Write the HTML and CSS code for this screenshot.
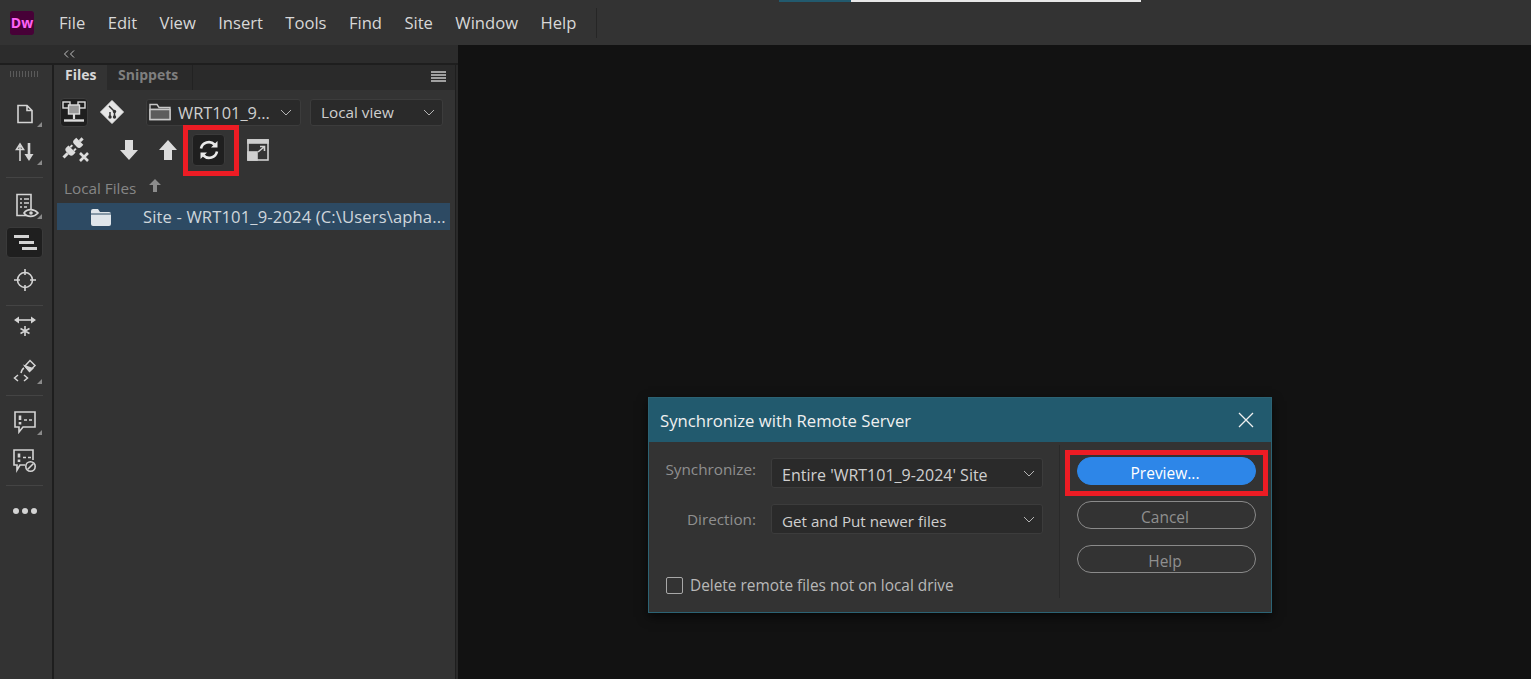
FILE: index.html
```html
<!DOCTYPE html>
<html lang="en">
  <head>
    <meta charset="UTF-8" />
    <title>Dreamweaver - Synchronize</title>
    <link rel="stylesheet" href="styles.css">
  </head>
  <body>
    <header class="menubar">
      <div class="logo">Dw</div>
      <nav class="menu">
        <span>File</span><span>Edit</span><span>View</span><span>Insert</span><span>Tools</span><span>Find</span><span>Site</span><span>Window</span><span>Help</span>
      </nav>
      <div class="menu-sep"></div>
      <div class="progress"><i></i></div>
    </header>

    <div class="workspace">
      <aside class="side">
        <div class="collapse-row">
          <svg width="12" height="8" viewBox="0 0 12 8" fill="none" stroke="#c0c0c0"><path d="M5 .5 1.500 4 5 7.500M11 .5 7.500 4 11 7.500"/></svg>
        </div>
        <div class="side-body">
          <div class="toolbar">
            <div class="grip"></div>
            <div class="tool-group g-file">
              <div class="tool corner">
                <svg width="20" height="20" viewBox="0 0 20 20" fill="none" stroke="#d4d4d4" stroke-width="1.600"><path d="M3 1.500h9l5 5v12H3zM12 1.500v5h5"/></svg>
              </div>
              <div class="tool corner">
                <svg width="22" height="22" viewBox="0 0 22 22" fill="none" stroke="#d4d4d4" stroke-width="1.600"><path d="M6 20V5M2.500 8.500 6 3l3.500 5.500H2.500z"/><path d="M15 2v13" stroke-width="2.600"/><path d="M10.500 13h9L15 20z" fill="#d4d4d4" stroke="none"/></svg>
              </div>
            </div>
            <div class="tool-group g-view">
              <div class="tool corner">
                <svg class="nudge" width="26" height="26" viewBox="0 0 26 26" fill="none" stroke="#d4d4d4" stroke-width="1.600"><path d="M3 1.500h14v21H3z"/><path d="M6 6h2M10 6h5M6 10h2M10 10h5M6 14h2M10 14h3"/><path d="M10 20c3-4.500 10-4.500 14 0-4 4.500-11 4.500-14 0z" fill="#333"/><circle cx="17" cy="20" r="1.800" fill="#d4d4d4" stroke="none"/></svg>
              </div>
              <div class="tool active">
                <svg width="24" height="18" viewBox="0 0 24 18" fill="#d4d4d4"><rect x="1" y="1" width="15" height="3"/><rect x="6" y="7" width="15" height="3"/><rect x="9" y="13" width="15" height="3"/></svg>
              </div>
              <div class="tool">
                <svg width="22" height="22" viewBox="0 0 22 22" fill="none" stroke="#d4d4d4" stroke-width="1.600"><circle cx="11" cy="11" r="7.500"/><path d="M11 0v6M11 16v6M0 11h6M16 11h6"/></svg>
              </div>
            </div>
            <div class="tool-group g-code">
              <div class="tool">
                <svg width="24" height="22" viewBox="0 0 24 22" fill="none" stroke="#d4d4d4" stroke-width="1.600"><path d="M3 5h18"/><path d="M6 1.500 1 5l5 3.500zM18 1.500 23 5l-5 3.500z" fill="#d4d4d4" stroke="none"/><path d="M12 11v10M7.500 13.500l9 5M16.500 13.500l-9 5"/></svg>
              </div>
              <div class="tool corner">
                <svg width="24" height="26" viewBox="0 0 24 26" fill="none" stroke="#d4d4d4" stroke-width="1.500"><path d="M12 8l5-5.500 5 5-5.500 5.500z"/><path d="M12 8l7.500 2.500-3 3z" fill="#d4d4d4"/><path d="M11 10c-2 1-2.500 3-3 5"/><path d="M5 17l-3.500 3L5 23M11 17l3.500 3L11 23"/></svg>
              </div>
            </div>
            <div class="tool-group g-comment">
              <div class="tool corner">
                <svg width="24" height="24" viewBox="0 0 24 24" fill="none" stroke="#d4d4d4" stroke-width="1.600"><path d="M2 2h20v15H10l-4 5v-5H2z"/><path d="M7 5.500v4.500" stroke-width="2.600"/><path d="M7 12v2.500" stroke-width="2.600"/><path d="M11 10h3M16 10h3" stroke-width="1.500"/></svg>
              </div>
              <div class="tool">
                <svg width="24" height="24" viewBox="0 0 24 24" fill="none" stroke="#d4d4d4" stroke-width="1.600"><path d="M12 16H7l-3 5v-5H1V1h19v10"/><path d="M6 4.500v4" stroke-width="2.600"/><path d="M6 10.500v2.500" stroke-width="2.600"/><path d="M10 8.500h3M15 8.500h3" stroke-width="1.500"/><circle cx="17.500" cy="17.500" r="4.700"/><path d="M14.500 20.500l6-6"/></svg>
              </div>
            </div>
            <div class="tool-group dots">
              <i></i><i></i><i></i>
            </div>
          </div>

          <section class="panel">
            <div class="tabs">
              <div class="tab on">Files</div>
              <div class="tab">Snippets</div>
              <div class="tabs-menu"><i></i><i></i><i></i><i></i></div>
            </div>

            <div class="panel-row top-row">
              <div class="icon-btn boxed">
                <svg width="24" height="23" viewBox="0 0 24 23" fill="none" stroke="#dcdcdc" stroke-width="1.400"><rect x="1" y="1" width="7" height="6"/><rect x="16" y="1" width="7" height="6"/><rect x="6.500" y="4" width="11" height="9" fill="#9a9a9a"/><path d="M12 13v5" stroke-width="2.200"/><path d="M2 19.500h20" stroke-width="2.400"/></svg>
              </div>
              <div class="git-btn">
                <svg width="24" height="24" viewBox="0 0 24 24"><path d="M12 .5 23.500 12 12 23.500.5 12z" fill="#e6e6e6" stroke="#e6e6e6" stroke-linejoin="round"/><path d="M9 6l5 5M14.500 11.500v5.500M10 12v5" stroke="#333" stroke-width="1.500" fill="none"/><circle cx="14.500" cy="11.500" r="1.700" fill="#333"/><circle cx="14.500" cy="17" r="1.700" fill="#333"/><circle cx="10" cy="17" r="1.700" fill="#333"/></svg>
              </div>
              <div class="select site-select">
                <svg width="22" height="18" viewBox="0 0 22 18" fill="none" stroke="#c8c8c8" stroke-width="1.400"><path d="M1 16.500V1.500h7l2 3h11v12zM1 6.500h20"/><path d="M1 6.500h20v10H1z" fill="#5c5c5c"/></svg>
                <span>WRT101_9...</span>
                <svg class="chev" width="12" height="7" viewBox="0 0 12 7" fill="none" stroke="#b4b4b4"><path d="M1 1l5 5 5-5"/></svg>
              </div>
              <div class="select view-select">
                <span>Local view</span>
                <svg class="chev" width="12" height="7" viewBox="0 0 12 7" fill="none" stroke="#b4b4b4"><path d="M1 1l5 5 5-5"/></svg>
              </div>
            </div>

            <div class="panel-row actions">
              <div class="act disconnect">
                <svg width="31" height="26" viewBox="0 0 31 26" fill="#dcdcdc"><g transform="rotate(45 12 12)"><rect x="10.500" y="-3" width="3" height="4"/><path d="M7 1h10v3q0 3-3 3h-4q-3 0-3-3z"/><rect x="8.500" y="9" width="2" height="3"/><rect x="13.500" y="9" width="2" height="3"/><path d="M7 12h10v3q0 3-3 3h-4q-3 0-3-3z"/><rect x="10.500" y="18" width="3" height="6"/></g><path d="M20 16l8 8M28 16l-8 8" fill="none" stroke="#dcdcdc" stroke-width="2.600"/></svg>
              </div>
              <div class="act down">
                <svg width="18" height="20" viewBox="0 0 18 20" fill="#dcdcdc"><path d="M5 0h8v10h5l-9 10-9-10h5z"/></svg>
              </div>
              <div class="act up">
                <svg width="18" height="20" viewBox="0 0 18 20" fill="#dcdcdc"><path d="M5 20h8V10h5L9 0 0 10h5z"/></svg>
              </div>
              <div class="refresh">
                <svg width="20" height="20" viewBox="0 0 20 20" fill="none" stroke="#eaeaea" stroke-width="2.600"><path d="M2 8.500A8 8 0 0 1 15.500 4.500"/><path d="M18 11.500A8 8 0 0 1 4.500 15.500"/><path d="M18.500 1v6.500H12z" fill="#eaeaea" stroke="none"/><path d="M1.500 19v-6.500H8z" fill="#eaeaea" stroke="none"/></svg>
              </div>
              <div class="act expand">
                <svg width="22" height="22" viewBox="0 0 22 22" fill="none" stroke="#cfcfcf" stroke-width="1.600"><rect x="1" y="1" width="20" height="20"/><rect x="1" y="1" width="20" height="3" fill="#cfcfcf"/><rect x="1" y="13" width="9" height="8" fill="#cfcfcf"/><path d="M11 13l6-5M13 7.500h4.500V12"/></svg>
              </div>
              <div class="mark mark-refresh"></div>
            </div>

            <div class="list-head">
              <span>Local Files</span>
              <svg width="12" height="13" viewBox="0 0 12 13" fill="#8c8c8c"><path d="M4 13h4V6h4L6 0 0 6h4z"/></svg>
            </div>
            <div class="list-row">
              <svg width="22" height="18" viewBox="0 0 22 18"><path d="M1 16V3q0-2 2-2h5l2 3h9q2 0 2 2v10q0 2-2 2H3q-2 0-2-2z" fill="#dfe5ea"/><path d="M1 6h20" stroke="#2d4a63"/></svg>
              <span>Site - WRT101_9-2024 (C:\Users\apha...</span>
            </div>
          </section>
        </div>
      </aside>

      <main class="canvas">
        <div class="dialog">
          <div class="dialog-title">
            <span>Synchronize with Remote Server</span>
            <svg width="16" height="16" viewBox="0 0 16 16" stroke="#f0f0f0" stroke-width="1.300"><path d="M1 1l14 14M15 1 1 15"/></svg>
          </div>
          <div class="dialog-body">
            <div class="dialog-form">
              <div class="field sync">
                <label>Synchronize:</label>
                <div class="select wide sync-select"><span>Entire 'WRT101_9-2024' Site</span>
                  <svg class="chev" width="12" height="7" viewBox="0 0 12 7" fill="none" stroke="#b4b4b4"><path d="M1 1l5 5 5-5"/></svg>
                </div>
              </div>
              <div class="field">
                <label>Direction:</label>
                <div class="select wide"><span>Get and Put newer files</span>
                  <svg class="chev" width="12" height="7" viewBox="0 0 12 7" fill="none" stroke="#b4b4b4"><path d="M1 1l5 5 5-5"/></svg>
                </div>
              </div>
              <div class="check"><i></i><span>Delete remote files not on local drive</span></div>
            </div>
            <div class="dialog-actions">
              <div class="btn primary">Preview...</div>
              <div class="btn">Cancel</div>
              <div class="btn">Help</div>
              <div class="mark mark-preview"></div>
            </div>
          </div>
        </div>
      </main>
    </div>
  </body>
</html>
```

FILE: styles.css
```css
* {
  box-sizing: border-box;
}

html,
body {
  height: 100%;
}

body {
  margin: 0;
  overflow: hidden;
  display: flex;
  flex-direction: column;
  font-family: "Open Sans", "Noto Sans", sans-serif;
  background-color: #121212;
  color: #d0d0d0;
}

.menubar {
  position: relative;
  flex: 0 0 45px;
  display: flex;
  align-items: center;
  padding-left: 10px;
  background-color: #333;
}

.logo {
  width: 24px;
  height: 24px;
  border-radius: 3px;
  background-color: #470137;
  color: #ff61f6;
  font-size: 14px;
  font-weight: 700;
  line-height: 24px;
  text-align: center;
}

.menu {
  display: flex;
  gap: 22.400px;
  margin-left: 25px;
  font-size: 16.600px;
  color: #d8d8d8;
}

.menu-sep {
  width: 1px;
  height: 30px;
  margin-left: 20px;
  background-color: #262626;
}

.progress {
  position: absolute;
  top: 0;
  left: 779px;
  width: 362px;
  height: 2px;
  background-color: #e8e8e8;
}

.progress i {
  display: block;
  width: 72px;
  height: 2px;
  background-color: #225a6e;
}

.workspace {
  flex: 1;
  display: flex;
  min-height: 0;
}

.side {
  flex: 0 0 458px;
  display: flex;
  flex-direction: column;
  background-color: #2a2a2a;
}

.collapse-row {
  flex: 0 0 20px;
  padding: 5px 0 0 63px;
  background-color: #2c2c2c;
  border-bottom: 2px solid #1e1e1e;
}

.collapse-row svg {
  display: block;
}

.side-body {
  flex: 1;
  display: flex;
  min-height: 0;
}

.toolbar {
  flex: 0 0 54px;
  padding: 0 9px 0 6px;
  background-color: #333;
  border-right: 2px solid #1e1e1e;
}

.grip {
  width: 30px;
  height: 6px;
  margin: 6px auto 0;
  background: repeating-linear-gradient(90deg, #5a5a5a 0 1px, transparent 1px 3px);
}

.tool-group {
  display: flex;
  flex-direction: column;
  gap: 7px;
  border-bottom: 1px solid #444;
}

.g-file {
  margin-top: 21px;
  padding-bottom: 10px;
}

.g-view {
  gap: 6px;
  padding: 12px 0 10px;
}

.g-code {
  gap: 14px;
  padding: 4px 0 9px;
}

.g-comment {
  gap: 8px;
  padding: 10px 0 9px;
}

.tool {
  position: relative;
  height: 31px;
  display: flex;
  align-items: center;
  justify-content: center;
}

.nudge {
  margin-left: 5px;
}

.tool.active {
  background-color: #1f1f1f;
  border: 1px solid #3a3a3a;
  border-radius: 4px;
}

.tool.corner::after {
  content: "";
  position: absolute;
  right: 1px;
  bottom: 2px;
  border-style: solid;
  border-width: 0 0 5px 5px;
  border-color: transparent transparent #8a8a8a transparent;
}

.tool-group.dots {
  flex-direction: row;
  justify-content: center;
  gap: 3px;
  padding-top: 22px;
  border-bottom: none;
}

.dots i {
  width: 6px;
  height: 6px;
  border-radius: 50%;
  background-color: #d4d4d4;
}

.panel {
  width: 402px;
  background-color: #333;
  border-right: 1px solid #1e1e1e;
}

.tabs {
  display: flex;
  align-items: stretch;
  height: 25px;
  background-color: #2a2a2a;
  font-size: 14px;
  font-weight: 700;
  line-height: 20px;
  color: #7f7f7f;
}

.tab {
  padding: 0 14px 0 11px;
  border-right: 1px solid #222;
}

.tab.on {
  width: 53px;
  background-color: #333;
  color: #d8d8d8;
  border-right: none;
}

.tabs-menu {
  display: flex;
  flex-direction: column;
  gap: 1px;
  margin: 6px 9px 0 auto;
}

.tabs-menu i {
  display: block;
  width: 15px;
  height: 2px;
  background-color: #a0a0a0;
}

.panel-row {
  position: relative;
  display: flex;
  align-items: center;
}

.top-row {
  margin-top: 8px;
  padding-left: 6px;
  height: 28px;
}

.icon-btn {
  width: 28px;
  height: 29px;
  display: flex;
  align-items: center;
  justify-content: center;
}

.boxed {
  background-color: #1f1f1f;
  border: 1px solid #3d3d3d;
  border-radius: 4px;
}

.git-btn {
  width: 24px;
  margin-left: 12px;
  display: flex;
}

.select {
  display: flex;
  align-items: center;
  background-color: #2a2a2a;
  border: 1px solid #3c3c3c;
  border-radius: 3px;
  font-size: 15.300px;
  color: #cfcfcf;
}

.select .chev {
  margin-left: auto;
}

.site-select {
  width: 155px;
  height: 27px;
  margin-left: 22px;
  padding: 0 8px 0 2px;
  font-size: 16.400px;
}

.site-select span {
  margin-left: 7px;
}

.view-select {
  width: 133px;
  height: 27px;
  margin-left: 9px;
  padding: 0 7px 0 10px;
}

.actions {
  height: 31px;
  margin-top: 8px;
}

.act {
  display: flex;
}

.disconnect {
  margin-left: 6px;
}

.down {
  margin-left: 29px;
}

.up {
  margin-left: 21px;
}

.refresh {
  width: 33px;
  height: 32px;
  margin-left: 15px;
  display: flex;
  align-items: center;
  justify-content: center;
  background-color: #1f1f1f;
  border: 1px solid #3a3a3a;
  border-radius: 4px;
}

.expand {
  margin-left: 22px;
}

.mark {
  position: absolute;
  border: 5px solid #ed1c24;
}

.mark-refresh {
  left: 129px;
  top: -9px;
  width: 56px;
  height: 51px;
}

.list-head {
  display: flex;
  align-items: center;
  gap: 13px;
  height: 26px;
  margin-top: 10px;
  padding-left: 10px;
  font-size: 15.300px;
  color: #868686;
}

.list-head svg {
  margin-top: -6px;
}

.list-row {
  display: flex;
  align-items: center;
  width: 393px;
  height: 27px;
  margin: 2px 0 0 3px;
  padding-left: 33px;
  background-color: #2d4a63;
  font-size: 16.600px;
  letter-spacing: 0.130px;
  color: #cfd6dc;
  white-space: nowrap;
}

.list-row span {
  margin-left: 31px;
}

.canvas {
  flex: 1;
  position: relative;
  background-color: #121212;
}

.dialog {
  position: absolute;
  left: 190px;
  top: 352px;
  width: 624px;
  height: 216px;
  display: flex;
  flex-direction: column;
  background-color: #333;
  border: 1px solid #2c6374;
  box-shadow: 0 4px 10px rgba(0, 0, 0, 0.6);
}

.dialog-title {
  flex: 0 0 44px;
  display: flex;
  align-items: center;
  justify-content: space-between;
  padding: 0 17px 0 11px;
  background-color: #225a6e;
  font-size: 16.700px;
  color: #f0f0f0;
}

.dialog-body {
  flex: 1;
  display: flex;
}

.dialog-form {
  flex: 0 0 411px;
  height: 153px;
  margin-top: 3px;
  padding-top: 13px;
  border-right: 1px solid #2a2a2a;
}

.field {
  display: flex;
  align-items: center;
  height: 30px;
  margin-bottom: 16px;
}

.field label {
  width: 107px;
  text-align: right;
  font-size: 15.300px;
  color: #8f8f8f;
}

.field.sync label {
  margin-top: -8px;
}

.select.wide {
  width: 272px;
  height: 30px;
  margin-left: 15px;
  padding: 3px 7px 0 10px;
  font-size: 15.200px;
}

.select.wide .chev {
  margin-top: -3px;
}

.select.sync-select {
  font-size: 16px;
}

.check {
  display: flex;
  align-items: center;
  gap: 7px;
  margin: 41px 0 0 17px;
  font-size: 15.400px;
  color: #b8b8b8;
}

.check i {
  width: 17px;
  height: 17px;
  border: 1px solid #a8a8a8;
  border-radius: 2px;
}

.dialog-actions {
  position: relative;
  flex: 1;
  display: flex;
  flex-direction: column;
  gap: 16px;
  padding: 15px 0 0 17px;
}

.btn {
  width: 179px;
  height: 28px;
  padding-right: 3px;
  border: 1px solid #8a8a8a;
  border-radius: 14px;
  font-size: 15.500px;
  line-height: 30px;
  text-align: center;
  color: #8f8f8f;
}

.btn.primary {
  background-color: #2d86e8;
  border-color: #2d86e8;
  color: #fff;
  line-height: 30px;
}

.mark-preview {
  left: 5px;
  top: 8px;
  width: 203px;
  height: 46px;
}
```
